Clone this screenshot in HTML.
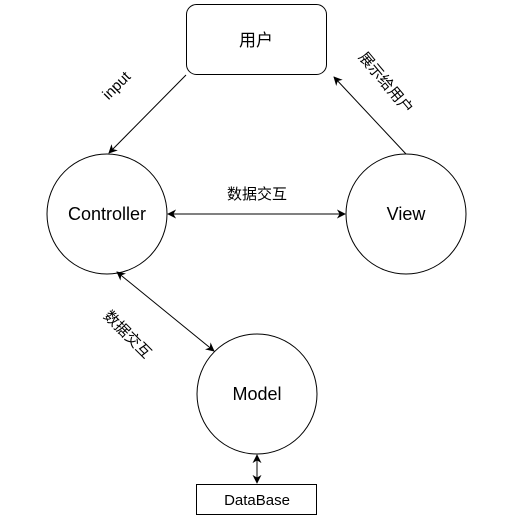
<!DOCTYPE html>
<html><head><meta charset="utf-8"><style>
html,body{margin:0;padding:0;background:#fff;width:507px;height:525px;overflow:hidden}
text{font-family:"Liberation Sans","Noto Sans CJK SC",sans-serif;fill:#000}
</style></head><body>
<svg width="507" height="525" viewBox="0 0 507 525" xmlns="http://www.w3.org/2000/svg">
<defs>
<marker id="a" viewBox="0 0 10 10" refX="9" refY="5" markerWidth="9" markerHeight="9" orient="auto-start-reverse" markerUnits="userSpaceOnUse">
<path d="M0,0 L10,5 L0,10 L3,5 z" fill="#000"/></marker>
</defs>
<rect x="186.5" y="4.5" width="140" height="70" rx="10" fill="#fff" stroke="#000"/>
<text x="256" y="46" font-size="17" text-anchor="middle">用户</text>
<circle cx="107" cy="214" r="60" fill="#fff" stroke="#000"/>
<text x="107" y="220" font-size="18" text-anchor="middle">Controller</text>
<circle cx="406" cy="214" r="60" fill="#fff" stroke="#000"/>
<text x="406" y="220" font-size="18" text-anchor="middle">View</text>
<circle cx="257" cy="394" r="60" fill="#fff" stroke="#000"/>
<text x="257" y="400" font-size="18" text-anchor="middle">Model</text>
<rect x="196.5" y="484.5" width="120" height="30" fill="#fff" stroke="#000"/>
<text x="257" y="505" font-size="15" text-anchor="middle">DataBase</text>
<g stroke="#000" fill="none">
<line x1="186" y1="75" x2="109" y2="153" marker-end="url(#a)"/>
<line x1="406" y1="154" x2="334" y2="77" marker-end="url(#a)"/>
<line x1="168" y1="214" x2="345" y2="214" marker-start="url(#a)" marker-end="url(#a)"/>
<line x1="117" y1="272" x2="214" y2="351" marker-start="url(#a)" marker-end="url(#a)"/>
<line x1="257" y1="455" x2="257" y2="483" marker-start="url(#a)" marker-end="url(#a)"/>
</g>
<text x="257" y="199" font-size="15" text-anchor="middle">数据交互</text>
<text font-size="15" text-anchor="middle" transform="translate(120,89) rotate(-45)">input</text>
<text font-size="15" text-anchor="middle" transform="translate(382,86) rotate(50)">展示给用户</text>
<text font-size="15" text-anchor="middle" transform="translate(124,338) rotate(45)">数据交互</text>
</svg>
</body></html>
